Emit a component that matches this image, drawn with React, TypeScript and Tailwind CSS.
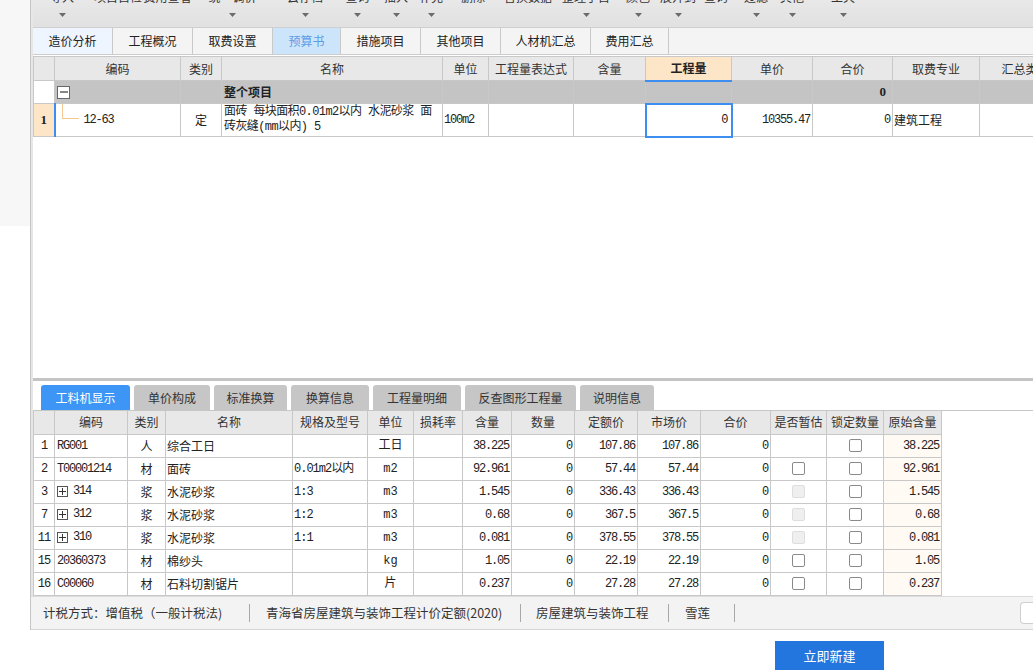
import React from 'react';

const CJK = "font-['Noto_Sans_CJK_SC','Noto_Sans',sans-serif]";
const GRID = "font-['Liberation_Mono','Noto_Sans_CJK_SC',monospace]";

// toolbar: label, width, arrow
const tools: [string, number, boolean][] = [
  ['导入', 58, true],
  ['项目自检', 54, false],
  ['费用查看', 45, false],
  ['统一调价', 85, true],
  ['云存档', 60, true],
  ['查询', 45, true],
  ['插入', 32, true],
  ['补充', 38, true],
  ['删除', 46, false],
  ['替换数据', 64, false],
  ['整理子目', 52, true],
  ['颜色', 52, true],
  ['展开到', 28, true],
  ['查询', 48, false],
  ['过滤', 32, true],
  ['其他', 40, true],
  ['工具', 62, true],
];

const topTabs = [
  { label: '造价分析', w: 80, state: 'soft' },
  { label: '工程概况', w: 80, state: '' },
  { label: '取费设置', w: 80, state: '' },
  { label: '预算书', w: 68, state: 'active' },
  { label: '措施项目', w: 80, state: '' },
  { label: '其他项目', w: 80, state: '' },
  { label: '人材机汇总', w: 90, state: '' },
  { label: '费用汇总', w: 78, state: '' },
];

const topCols = [21, 126, 41, 221, 46, 85, 72, 86, 81, 80, 87, 80];
const topHeads = ['', '编码', '类别', '名称', '单位', '工程量表达式', '含量', '工程量', '单价', '合价', '取费专业', '汇总类'];

const subTabs = [
  { label: '工料机显示', w: 89 },
  { label: '单价构成', w: 76 },
  { label: '标准换算', w: 73 },
  { label: '换算信息', w: 78 },
  { label: '工程量明细', w: 88 },
  { label: '反查图形工程量', w: 111 },
  { label: '说明信息', w: 74 },
];

const botCols = [21, 73, 38, 127, 75, 46, 49, 49, 63, 63, 63, 70, 56, 57, 58];
const botHeads = ['', '编码', '类别', '名称', '规格及型号', '单位', '损耗率', '含量', '数量', '定额价', '市场价', '合价', '是否暂估', '锁定数量', '原始含量'];

type Row = {
  no: string;
  code: string;
  plus?: boolean;
  type: string;
  name: string;
  spec: string;
  unit: string;
  qty: string;
  quota: string;
  market: string;
  est: 'none' | 'box' | 'disabled';
};

const rows: Row[] = [
  { no: '1', code: 'RG001', type: '人', name: '综合工日', spec: '', unit: '工日', qty: '38.225', quota: '107.86', market: '107.86', est: 'none' },
  { no: '2', code: 'T00001214', type: '材', name: '面砖', spec: '0.01m2以内', unit: 'm2', qty: '92.961', quota: '57.44', market: '57.44', est: 'box' },
  { no: '3', code: '314', plus: true, type: '浆', name: '水泥砂浆', spec: '1:3', unit: 'm3', qty: '1.545', quota: '336.43', market: '336.43', est: 'disabled' },
  { no: '7', code: '312', plus: true, type: '浆', name: '水泥砂浆', spec: '1:2', unit: 'm3', qty: '0.68', quota: '367.5', market: '367.5', est: 'disabled' },
  { no: '11', code: '310', plus: true, type: '浆', name: '水泥砂浆', spec: '1:1', unit: 'm3', qty: '0.081', quota: '378.55', market: '378.55', est: 'disabled' },
  { no: '15', code: '20360373', type: '材', name: '棉纱头', spec: '', unit: 'kg', qty: '1.05', quota: '22.19', market: '22.19', est: 'box' },
  { no: '16', code: 'C00060', type: '材', name: '石料切割锯片', spec: '', unit: '片', qty: '0.237', quota: '27.28', market: '27.28', est: 'box' },
];

const cell = 'border border-[#c8c8c8]';
const num = `${cell} text-right pr-[2px] tracking-[-1.2px]`;

function Arrow() {
  return (
    <svg width="7" height="4" viewBox="0 0 7 4" className="mt-[2px]">
      <path d="M0 0h7L3.5 4z" fill="#6b6b6b" />
    </svg>
  );
}

function CheckBox({ disabled }: { disabled?: boolean }) {
  return (
    <span
      className={`inline-block w-[13px] h-[13px] rounded-[2px] border ${
        disabled ? 'border-[#dedede] bg-[#efefef]' : 'border-[#8a8a8a] bg-white'
      }`}
    />
  );
}

function PlusBox() {
  return (
    <span className="inline-flex items-center justify-center w-[11px] h-[11px] border border-[#555] bg-white mr-[5px]">
      <svg width="7" height="7" viewBox="0 0 7 7">
        <path d="M3.5 0v7M0 3.5h7" stroke="#333" strokeWidth="1" />
      </svg>
    </span>
  );
}

function Sep() {
  return <span className="w-px h-[18px] bg-[#a8a8a8] shrink-0" />;
}

export default function App() {
  return (
    <div className={`w-[1033px] h-[670px] overflow-hidden bg-white ${CJK}`}>
      <div className="flex h-[630px]">
        {/* left strip */}
        <div className="w-[30px] flex flex-col shrink-0">
          <div className="h-[226px] bg-[#f7f7f7]" />
          <div className="flex-1 bg-white" />
        </div>

        {/* main panel */}
        <div className="flex-1 flex flex-col min-w-0 border-l border-[#c6c6c6]">
          <div className="flex flex-1 min-h-0">
            <div className="w-[2px] bg-[#e6e6e6] shrink-0" />
            <div className="flex-1 flex flex-col min-w-0">
              {/* toolbar */}
              <div className="h-[28px] bg-gradient-to-b from-[#e8e8e8] to-[#e1e1e1] border-b border-[#cfcfcf] flex overflow-hidden shrink-0">
                {tools.map(([label, w, arrow], i) => (
                  <div key={i} style={{ width: w }} className="flex flex-col items-center shrink-0">
                    <span className="text-[12px] leading-[14px] mt-[-10px] text-[#333] whitespace-nowrap">{label}</span>
                    {arrow ? <div className="mt-[7px]"><Arrow /></div> : null}
                  </div>
                ))}
              </div>

              {/* top tabs */}
              <div className="h-[27px] bg-[#f4f4f4] border-b border-[#cdcdcd] flex shrink-0">
                {topTabs.map((t) => (
                  <div
                    key={t.label}
                    style={{ width: t.w }}
                    className={`flex items-center justify-center text-[12px] border-r border-[#c9c9c9] shrink-0 ${
                      t.state === 'active'
                        ? 'bg-[#cde5fb] text-[#5b9de6]'
                        : t.state === 'soft'
                        ? 'bg-[#eef5ff] text-[#222]'
                        : 'text-[#222]'
                    }`}
                  >
                    {t.label}
                  </div>
                ))}
              </div>

              {/* top grid */}
              <div className="h-[323px] overflow-hidden shrink-0 bg-white pt-px">
                <table className={`table-fixed border-collapse w-[1026px] ${GRID} text-[12px] text-[#222]`}>
                  <colgroup>
                    {topCols.map((w, i) => (
                      <col key={i} style={{ width: w }} />
                    ))}
                  </colgroup>
                  <thead>
                    <tr className="h-[24px] bg-[#e8e8e8]">
                      {topHeads.map((h, i) =>
                        h === '工程量' ? (
                          <th
                            key={i}
                            className={`border border-[#c8c8c8] border-b-2 border-b-[#3d8ef0] bg-[#fde6c8] font-bold text-[12px] ${CJK} text-[#222]`}
                          >
                            {h}
                          </th>
                        ) : (
                          <th
                            key={i}
                            className={`border border-[#c8c8c8] font-normal text-[12px] ${CJK} text-[#333] whitespace-nowrap overflow-hidden`}
                          >
                            {h}
                          </th>
                        )
                      )}
                    </tr>
                  </thead>
                  <tbody>
                    <tr className="h-[23px] bg-[#c4c4c4]">
                      <td className={`bg-white ${cell}`} />
                      <td className="border-y border-[#c8c8c8] p-0">
                        <div className="flex h-[22px] items-center pl-[2px]">
                          <span className="inline-flex items-center justify-center w-[13px] h-[13px] border border-[#666] bg-white">
                            <svg width="8" height="2" viewBox="0 0 8 2">
                              <path d="M0 1h8" stroke="#333" strokeWidth="1.2" />
                            </svg>
                          </span>
                        </div>
                      </td>
                      <td className={cell} />
                      <td className={`${cell} font-bold text-[12px] px-[2px] ${CJK}`}>整个项目</td>
                      <td className={cell} />
                      <td className={cell} />
                      <td className={cell} />
                      <td className={cell} />
                      <td className={cell} />
                      <td className={`${cell} text-right pr-[6px] font-bold font-['Liberation_Serif'] text-[13px]`}>0</td>
                      <td className={cell} />
                      <td className={cell} />
                    </tr>
                    <tr className="h-[32px]">
                      <td className={`bg-[#fde5c8] ${cell} text-center font-bold font-['Liberation_Serif'] text-[13px]`}>1</td>
                      <td className="border-y border-r border-[#c8c8c8] border-l-2 border-l-[#3d8ef0] p-0">
                        <div className="flex h-[32px]">
                          <div className="w-[6px] shrink-0" />
                          <div className="w-[17px] h-[15px] border-l border-b border-[#f3c98f] shrink-0" />
                          <span className="self-center ml-[5px] tracking-[-1.2px]">12-63</span>
                        </div>
                      </td>
                      <td className={`${cell} text-center text-[12px] ${CJK}`}>定</td>
                      <td className={`${cell} px-[2px] leading-[15px] text-[12px] tracking-[-0.6px]`}>
                        面砖 每块面积0.01m2以内 水泥砂浆 面砖灰缝(mm以内) 5
                      </td>
                      <td className={`${cell} px-[1px] tracking-[-1.2px]`}>100m2</td>
                      <td className={cell} />
                      <td className={cell} />
                      <td className="border-2 border-[#3d8ef0] text-right pr-[2px]">0</td>
                      <td className={num}>10355.47</td>
                      <td className={num}>0</td>
                      <td className={`${cell} px-[1px] text-[12px] ${CJK}`}>建筑工程</td>
                      <td className={cell} />
                    </tr>
                  </tbody>
                </table>
              </div>

              {/* splitter */}
              <div className="h-[3px] bg-[#c4c4c4] shrink-0" />

              {/* sub tabs */}
              <div className="h-[29px] flex items-end pl-[8px] gap-[4px] shrink-0">
                {subTabs.map((t, i) => (
                  <div
                    key={t.label}
                    style={{ width: t.w }}
                    className={`h-[25px] rounded-t-[3px] flex items-center justify-center text-[12px] ${
                      i === 0 ? 'bg-[#3d95f5] text-white' : 'bg-[#c6c6c6] text-[#333]'
                    }`}
                  >
                    {t.label}
                  </div>
                ))}
              </div>

              {/* bottom grid */}
              <div className="flex-1 min-h-0 overflow-hidden border-t border-[#c6c6c6]">
                <table className={`table-fixed border-collapse w-[908px] ${GRID} text-[12px] text-[#222]`}>
                  <colgroup>
                    {botCols.map((w, i) => (
                      <col key={i} style={{ width: w }} />
                    ))}
                  </colgroup>
                  <thead>
                    <tr className="h-[23px] bg-[#e8e8e8]">
                      {botHeads.map((h, i) => (
                        <th
                          key={i}
                          className={`border border-t-0 border-[#c8c8c8] font-normal text-[12px] ${CJK} text-[#333] whitespace-nowrap overflow-hidden`}
                        >
                          {h}
                        </th>
                      ))}
                    </tr>
                  </thead>
                  <tbody>
                    {rows.map((r) => (
                      <tr key={r.no} className="h-[23px]">
                        <td className={`${cell} text-center tracking-[-1px]`}>{r.no}</td>
                        <td className={`${cell} px-[2px] tracking-[-1.2px] whitespace-nowrap overflow-hidden`}>
                          <span className="inline-flex items-center">
                            {r.plus ? <PlusBox /> : null}
                            {r.code}
                          </span>
                        </td>
                        <td className={`${cell} text-center text-[12px] ${CJK}`}>{r.type}</td>
                        <td className={`${cell} px-[1px] text-[12px] ${CJK}`}>{r.name}</td>
                        <td className={`${cell} px-[1px] tracking-[-1px] whitespace-nowrap`}>{r.spec}</td>
                        <td className={`${cell} text-center`}>{r.unit}</td>
                        <td className={cell} />
                        <td className={num}>{r.qty}</td>
                        <td className={num}>0</td>
                        <td className={num}>{r.quota}</td>
                        <td className={num}>{r.market}</td>
                        <td className={num}>0</td>
                        <td className={`${cell} text-center leading-[0]`}>
                          {r.est === 'none' ? null : <CheckBox disabled={r.est === 'disabled'} />}
                        </td>
                        <td className={`${cell} text-center leading-[0]`}>
                          <CheckBox />
                        </td>
                        <td className={`${num} bg-[#fffaf3]`}>{r.qty}</td>
                      </tr>
                    ))}
                  </tbody>
                </table>
              </div>
            </div>
          </div>

          {/* status bar */}
          <div className="h-[34px] bg-[#f3f3f3] border-t border-[#dcdcdc] border-b border-b-[#d4d4d4] flex items-center text-[12.5px] text-[#333] shrink-0">
            <span className="w-[218px] pl-[12px] whitespace-nowrap">计税方式：增值税（一般计税法)</span>
            <Sep />
            <span className="w-[270px] pl-[16px] whitespace-nowrap">青海省房屋建筑与装饰工程计价定额(2020)</span>
            <Sep />
            <span className="w-[147px] pl-[15px] whitespace-nowrap">房屋建筑与装饰工程</span>
            <Sep />
            <span className="w-[65px] pl-[16px] whitespace-nowrap">雪莲</span>
            <Sep />
            <span className="ml-auto w-[13px] h-[22px] border border-[#cfcfcf] rounded-l-[4px] border-r-0 bg-white" />
          </div>
        </div>
      </div>

      {/* bottom area */}
      <div className="flex pt-[11px]">
        <div className="ml-[775px] w-[109px] h-[36px] bg-[#2376de] text-white text-[13px] flex items-center justify-center pb-[6px]">
          立即新建
        </div>
      </div>
    </div>
  );
}
